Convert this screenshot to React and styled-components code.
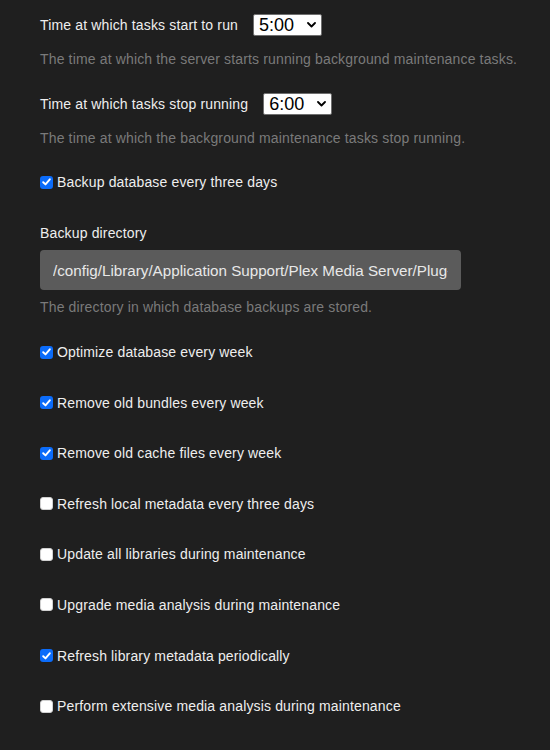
import React from "react";
import styled, { createGlobalStyle } from "styled-components";

const GlobalStyle = createGlobalStyle`
  html, body {
    margin: 0;
    padding: 0;
    background: #1f1f1f;
  }
  body {
    font-family: "Liberation Sans", Arial, sans-serif;
  }
`;

const Page = styled.div`
  width: 550px;
  min-height: 750px;
  box-sizing: border-box;
  padding: 14px 16px 0 40px;
  background: #1f1f1f;
  color: #eeeeee;
  font-size: 14px;
  letter-spacing: 0.15px;
`;

const Setting = styled.div`
  display: flex;
  flex-direction: column;
  margin-bottom: ${(p) => p.$gap}px;
`;

const InlineRow = styled.div`
  display: flex;
  align-items: center;
  gap: 15px;
  height: 22px;
`;

const Label = styled.label`
  color: #eeeeee;
  line-height: 20px;
`;

const Help = styled.div`
  margin-top: ${(p) => p.$top}px;
  color: #7a7a7a;
  line-height: 20px;
  white-space: nowrap;
`;

const SelectWrap = styled.div`
  position: relative;
  height: 22px;
`;

const Select = styled.select`
  appearance: none;
  -webkit-appearance: none;
  height: 22px;
  width: 69px;
  box-sizing: border-box;
  padding: 0 0 0 5px;
  background: #ffffff;
  border: 1px solid #6f6f6f;
  border-radius: 2px;
  color: #000000;
  font-family: "Liberation Sans", Arial, sans-serif;
  font-size: 18px;
  line-height: 20px;
`;

const Chevron = styled.svg`
  position: absolute;
  right: 6px;
  top: 8px;
  pointer-events: none;
`;

const TextInput = styled.input`
  margin-top: 7px;
  width: 421px;
  height: 40px;
  box-sizing: border-box;
  padding: 0 13px;
  border: none;
  border-radius: 4px;
  background: #5b5b5b;
  color: #e8e8e8;
  font-family: "Liberation Sans", Arial, sans-serif;
  font-size: 15.2px;
  letter-spacing: 0;
  outline: none;
`;

const CheckRow = styled.label`
  display: flex;
  align-items: center;
  gap: 4px;
  height: 20px;
  color: #eeeeee;
  line-height: 20px;
`;

const Box = styled.span`
  width: 13px;
  height: 13px;
  flex: none;
  box-sizing: border-box;
  border-radius: 3px;
  display: flex;
  align-items: center;
  justify-content: center;
  background: ${(p) => (p.$on ? "#0b6cfa" : "#ffffff")};
  border: ${(p) => (p.$on ? "none" : "1px solid #d0d0d0")};
`;

const TimeSelect = ({ value }) => (
  <SelectWrap>
    <Select defaultValue={value}>
      {["0:00", "1:00", "2:00", "3:00", "4:00", "5:00", "6:00", "7:00"].map((t) => (
        <option key={t}>{t}</option>
      ))}
    </Select>
    <Chevron width="9" height="6" viewBox="0 0 9 6">
      <path d="M1 1 L4.5 4.5 L8 1" fill="none" stroke="#000" strokeWidth="1.8" strokeLinecap="round" strokeLinejoin="round" />
    </Chevron>
  </SelectWrap>
);

const Check = ({ on, children, gap }) => (
  <Setting $gap={gap}>
    <CheckRow>
      <Box $on={on}>
        {on && (
          <svg width="9" height="8" viewBox="0 0 9 8">
            <path d="M1.2 4.2 L3.5 6.4 L7.8 1.3" fill="none" stroke="#fff" strokeWidth="1.9" strokeLinecap="round" strokeLinejoin="round" />
          </svg>
        )}
      </Box>
      {children}
    </CheckRow>
  </Setting>
);

const tasks = [
  ["Optimize database every week", true],
  ["Remove old bundles every week", true],
  ["Remove old cache files every week", true],
  ["Refresh local metadata every three days", false],
  ["Update all libraries during maintenance", false],
  ["Upgrade media analysis during maintenance", false],
  ["Refresh library metadata periodically", true],
  ["Perform extensive media analysis during maintenance", false],
];

export default function App() {
  return (
    <>
      <GlobalStyle />
      <Page>
        <Setting $gap={24}>
          <InlineRow>
            <Label>Time at which tasks start to run</Label>
            <TimeSelect value="5:00" />
          </InlineRow>
          <Help $top={13}>The time at which the server starts running background maintenance tasks.</Help>
        </Setting>
        <Setting $gap={24}>
          <InlineRow>
            <Label>Time at which tasks stop running</Label>
            <TimeSelect value="6:00" />
          </InlineRow>
          <Help $top={13}>The time at which the background maintenance tasks stop running.</Help>
        </Setting>
        <Check on gap={31}>Backup database every three days</Check>
        <Setting $gap={25}>
          <Label>Backup directory</Label>
          <TextInput readOnly value="/config/Library/Application Support/Plex Media Server/Plug-in Support/Databases" />
          <Help $top={7}>The directory in which database backups are stored.</Help>
        </Setting>
        {tasks.map(([text, on]) => (
          <Check key={text} on={on} gap={30.6}>
            {text}
          </Check>
        ))}
      </Page>
    </>
  );
}
